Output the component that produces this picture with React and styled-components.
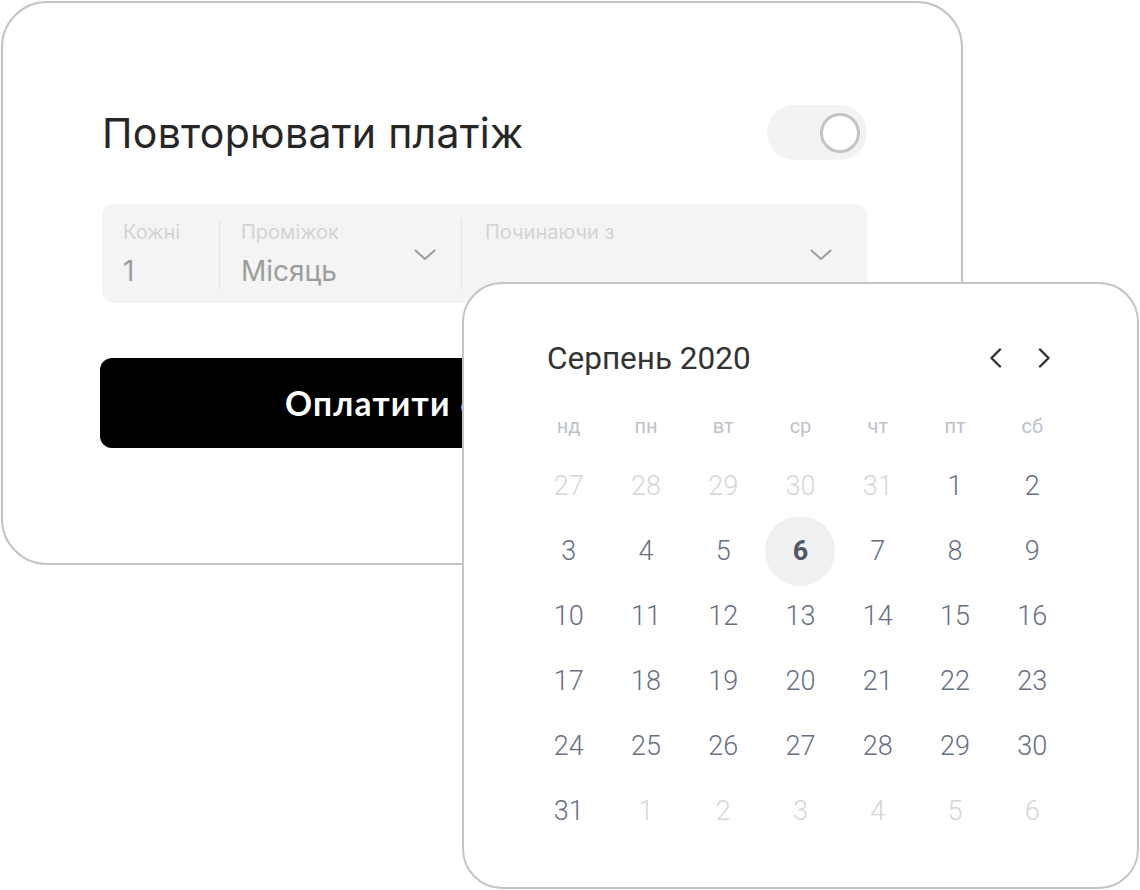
import React from "react";
import styled, { createGlobalStyle } from "styled-components";

const GlobalStyle = createGlobalStyle`
  html, body {
    margin: 0;
    padding: 0;
    background: #ffffff;
  }
  * {
    box-sizing: border-box;
  }
`;

const Stage = styled.div`
  position: relative;
  width: 1140px;
  height: 890px;
  overflow: hidden;
  font-family: "Inter", "Liberation Sans", sans-serif;
`;

// основна картка з налаштуванням повторення
const Card = styled.div`
  margin: 1px 0 0 1px;
  width: 962px;
  height: 564px;
  border: 2px solid #c4c4c4;
  border-radius: 46px;
  padding: 102px 94px 0 99px;
  display: flex;
  flex-direction: column;
`;

const TitleRow = styled.div`
  display: flex;
  align-items: center;
  justify-content: space-between;
  height: 55px;
`;

const Title = styled.h1`
  margin: 0;
  font-size: 41px;
  font-weight: 400;
  color: #262626;
  letter-spacing: 0.3px;
`;

const Toggle = styled.div`
  width: 100px;
  height: 55px;
  border-radius: 28px;
  background: #f3f3f3;
  display: flex;
  align-items: center;
  justify-content: flex-end;
  padding-right: 7px;
`;

const Knob = styled.div`
  width: 40px;
  height: 40px;
  border-radius: 50%;
  background: #ffffff;
  border: 3px solid #c4c4c4;
`;

const Fields = styled.div`
  margin-top: 44px;
  height: 99px;
  border-radius: 12px;
  background: #f4f4f4;
  display: flex;
  align-items: center;
`;

const Field = styled.div`
  width: ${(p) => p.w}px;
  height: 100%;
  display: flex;
  align-items: flex-start;
  justify-content: space-between;
  padding: 16px ${(p) => p.pr}px 0 ${(p) => p.pl}px;
`;

const FieldText = styled.div`
  display: flex;
  flex-direction: column;
  gap: 11px;
`;

const Label = styled.span`
  font-size: 20px;
  line-height: 24px;
  color: #d3d3d3;
`;

const Value = styled.span`
  font-size: 28px;
  line-height: 32px;
  height: 32px;
  color: #9a9f9b;
`;

const Divider = styled.div`
  width: 1px;
  height: 70px;
  background: #e4e4e4;
  flex-shrink: 0;
`;

const Chevron = styled.svg`
  margin-top: 29px;
  flex-shrink: 0;
`;

const PayButton = styled.button`
  margin: 55px 0 0 -2px;
  width: calc(100% + 2px);
  height: 90px;
  border: 0;
  border-radius: 12px;
  background: #000000;
  color: #ffffff;
  text-align: left;
  padding: 0 0 0 185px;
  font-family: "Lato", "Liberation Sans", sans-serif;
  font-size: 33.5px;
  line-height: 34px;
  font-weight: 700;
  letter-spacing: 1.2px;
  cursor: pointer;
`;

// спливаючий календар поверх картки
const Calendar = styled.div`
  position: absolute;
  left: 462px;
  top: 282px;
  width: 677px;
  height: 607px;
  background: #ffffff;
  border: 2px solid #c4c4c4;
  border-radius: 40px;
  padding: 49px 66px 0 66px;
  font-family: "Roboto", "Liberation Sans", sans-serif;
`;

const CalHeader = styled.div`
  height: 50px;
  display: flex;
  align-items: center;
  justify-content: space-between;
  padding: 0 20px 0 17px;
  margin-bottom: 15px;
`;

const Month = styled.span`
  font-size: 31.5px;
  color: #333333;
`;

const Arrows = styled.div`
  display: flex;
  align-items: center;
  gap: 36px;
`;

const Grid = styled.div`
  display: grid;
  grid-template-columns: repeat(7, 1fr);
  grid-template-rows: 55px;
  grid-auto-rows: 65px;
`;

const WeekDay = styled.div`
  display: flex;
  align-items: center;
  justify-content: center;
  font-size: 20px;
  line-height: 24px;
  color: #bcc2ca;
`;

const Day = styled.div`
  display: flex;
  align-items: center;
  justify-content: center;
  font-size: 27px;
  font-weight: 300;
  color: ${(p) => (p.muted ? "#d3d7dc" : "#667082")};
`;

const Selected = styled.span`
  flex-shrink: 0;
  width: 70px;
  height: 70px;
  border-radius: 50%;
  background: #eff0f2;
  display: flex;
  align-items: center;
  justify-content: center;
  font-weight: 700;
  color: #4f5763;
`;

const weekDays = ["нд", "пн", "вт", "ср", "чт", "пт", "сб"];

const days = [
  ...[27, 28, 29, 30, 31].map((d) => ({ d, muted: true })),
  ...Array.from({ length: 31 }, (_, i) => ({ d: i + 1 })),
  ...[1, 2, 3, 4, 5, 6].map((d) => ({ d, muted: true })),
];

const DownIcon = () => (
  <Chevron width="22" height="12" viewBox="0 0 22 12" fill="none">
    <polyline
      points="1.5,1.5 11,10 20.5,1.5"
      stroke="#9a9e9c"
      strokeWidth="2"
      strokeLinecap="round"
      strokeLinejoin="round"
    />
  </Chevron>
);

const ArrowIcon = ({ dir }) => (
  <svg width="13" height="20" viewBox="0 0 13 20" fill="none">
    <polyline
      points={dir === "left" ? "11,1.5 2.5,10 11,18.5" : "2,1.5 10.5,10 2,18.5"}
      stroke="#333333"
      strokeWidth="2.4"
      strokeLinecap="round"
      strokeLinejoin="round"
    />
  </svg>
);

export default function App() {
  return (
    <Stage>
      <GlobalStyle />
      <Card>
        <TitleRow>
          <Title>Повторювати платіж</Title>
          <Toggle>
            <Knob />
          </Toggle>
        </TitleRow>
        <Fields>
          <Field w={117} pl={21} pr={10}>
            <FieldText>
              <Label>Кожні</Label>
              <Value>1</Value>
            </FieldText>
          </Field>
          <Divider />
          <Field w={241} pl={21} pr={25}>
            <FieldText>
              <Label>Проміжок</Label>
              <Value>Місяць</Value>
            </FieldText>
            <DownIcon />
          </Field>
          <Divider />
          <Field w={405} pl={23} pr={35}>
            <FieldText>
              <Label>Починаючи з</Label>
              <Value />
            </FieldText>
            <DownIcon />
          </Field>
        </Fields>
        <PayButton>Оплатити 600</PayButton>
      </Card>

      <Calendar>
        <CalHeader>
          <Month>Серпень 2020</Month>
          <Arrows>
            <ArrowIcon dir="left" />
            <ArrowIcon dir="right" />
          </Arrows>
        </CalHeader>
        <Grid>
          {weekDays.map((w) => (
            <WeekDay key={w}>{w}</WeekDay>
          ))}
          {days.map((item, i) => (
            <Day key={i} muted={item.muted}>
              {!item.muted && item.d === 6 ? <Selected>6</Selected> : item.d}
            </Day>
          ))}
        </Grid>
      </Calendar>
    </Stage>
  );
}
